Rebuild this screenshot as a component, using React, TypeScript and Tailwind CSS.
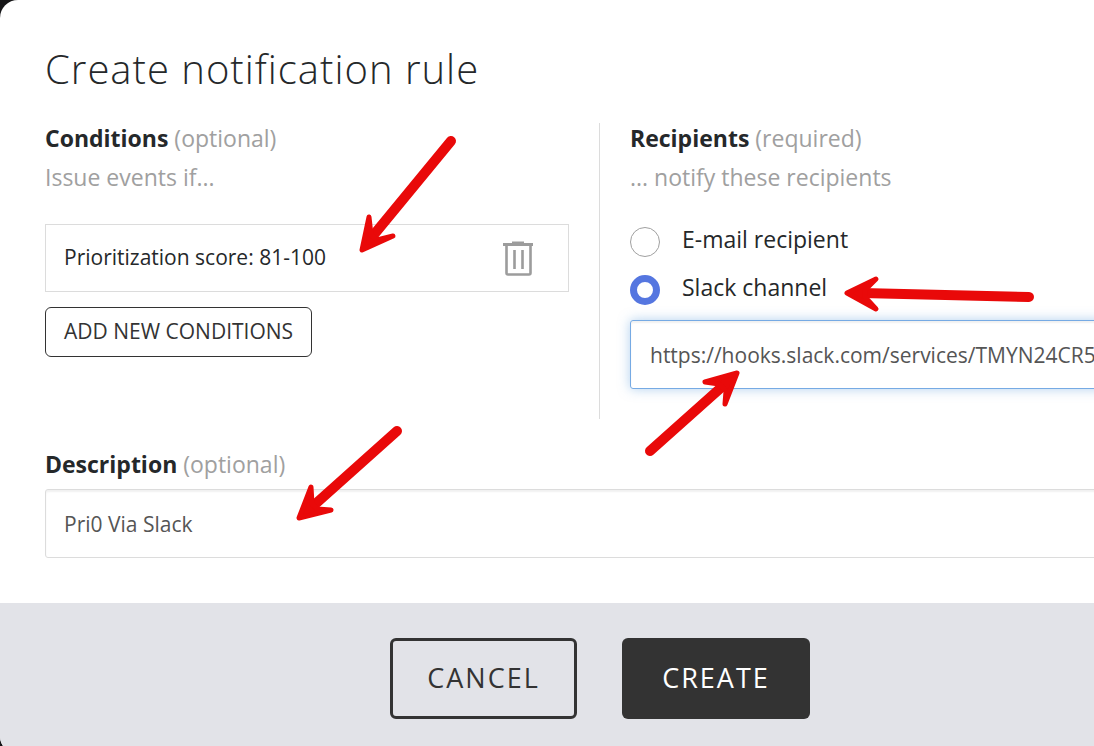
import { useState } from 'react'

const recipientTypes = [
  { id: 'email', label: 'E-mail recipient' },
  { id: 'slack', label: 'Slack channel' },
]

// Callout arrows: a thick shaft plus a swept-back head
const arrows = [
  { id: 'condition', shaft: 'M451 141L372 237', head: 'M362 250L369 217L371 235L377 240L393 236Z' },
  { id: 'channel', shaft: 'M1029 297L862 293', head: 'M847 293L876 279L865 290L865 297L876 309Z' },
  { id: 'webhook', shaft: 'M650 451L724 385', head: 'M737 373L705 382L719 384L726 391L725 404Z' },
  { id: 'description', shaft: 'M397 431L312 507', head: 'M299 518L311 487L312 504L317 509L331 510Z' },
]

function TrashIcon() {
  return (
    <svg width="32" height="36" viewBox="0 0 32 36" fill="none" stroke="#9c9c9c" aria-hidden="true">
      <path d="M1 4.5h30" strokeWidth="3" />
      <path d="M10 2.500h12" strokeWidth="2" />
      <path d="M4.500 5v28a1.500 1.500 0 0 0 1.500 1.500h21a1.500 1.500 0 0 0 1.500-1.500V5" strokeWidth="2.600" />
      <path d="M12.500 10v19M20.500 10v19" strokeWidth="2.600" />
    </svg>
  )
}

export default function App() {
  const [recipient, setRecipient] = useState('slack')
  const [webhook, setWebhook] = useState('https://hooks.slack.com/services/TMYN24CR5')
  const [description, setDescription] = useState('Pri0 Via Slack')

  return (
    <div className="h-screen overflow-hidden bg-[#161618] font-['Open_Sans',sans-serif] text-[#25282a]">
      <div role="dialog" aria-labelledby="rule-title" className="relative w-full min-w-[1200px] overflow-hidden rounded-[18px] bg-white">
        <div className="px-[45px] pt-[42px] pb-[45px]">
          <h1 id="rule-title" className="mb-[27px] text-[40px] leading-[54px] font-light tracking-wide">
            Create notification rule
          </h1>

          <div className="grid grid-cols-2">
            {/* Conditions */}
            <section className="min-h-[296px] border-r border-[#dcdcdc] pr-[30px]">
              <h2 className="text-[23px] leading-[30px] font-bold">
                Conditions <span className="font-normal text-[#a0a0a0]">(optional)</span>
              </h2>
              <p className="mt-[9px] text-[23px] leading-[30px] text-[#a0a0a0]">Issue events if...</p>
              <div className="mt-8 flex h-[68px] items-center justify-between border border-[#dcdcdc] pr-[34px] pl-[18px]">
                <span className="text-[21px]">Prioritization score: 81-100</span>
                <button type="button" aria-label="Remove condition">
                  <TrashIcon />
                </button>
              </div>
              <button
                type="button"
                className="mt-[15px] h-[50px] rounded-md border border-[#333] px-[18px] text-[21px] text-[#333]"
              >
                ADD NEW CONDITIONS
              </button>
            </section>

            {/* Recipients */}
            <section className="pl-[30px]">
              <h2 className="text-[23px] leading-[30px] font-bold">
                Recipients <span className="font-normal text-[#a0a0a0]">(required)</span>
              </h2>
              <p className="mt-[9px] text-[23px] leading-[30px] text-[#a0a0a0]">... notify these recipients</p>
              <div className="mt-8 space-y-[15px]">
                {recipientTypes.map(type => (
                  <label key={type.id} className="flex items-start gap-[22px] text-[23px] leading-[30px]">
                    <input
                      type="radio"
                      name="recipient"
                      value={type.id}
                      checked={recipient === type.id}
                      onChange={() => setRecipient(type.id)}
                      className="mt-[3px] size-[30px] shrink-0 appearance-none rounded-full border border-[#a0a0a0] bg-white checked:border-[7px] checked:border-[#5576e0]"
                    />
                    {type.label}
                  </label>
                ))}
              </div>
              <input
                type="text"
                aria-label="Slack webhook URL"
                value={webhook}
                onChange={e => setWebhook(e.target.value)}
                className="mt-[15px] h-[69px] w-full rounded-[3px] border border-[#76aae4] px-[19px] text-[21px] text-[#555] shadow-[0_0_12px_rgba(102,163,224,0.5),inset_0_2px_2px_rgba(0,0,0,0.06)] outline-none"
              />
            </section>
          </div>

          {/* Description */}
          <label htmlFor="description" className="mt-[30px] block text-[23px] leading-[30px] font-bold">
            Description <span className="font-normal text-[#a0a0a0]">(optional)</span>
          </label>
          <input
            id="description"
            type="text"
            value={description}
            onChange={e => setDescription(e.target.value)}
            className="mt-[10px] block h-[69px] w-full rounded-[3px] border border-[#dcdcdc] px-[18px] text-[21px] text-[#555] shadow-[inset_0_2px_2px_rgba(0,0,0,0.06)] outline-none"
          />
        </div>

        <footer className="flex justify-center gap-[45px] bg-[#e2e3e8] py-[35px]">
          <button type="button" className="h-[81px] w-[187px] rounded-md border-3 border-[#333] text-[27px] tracking-[2px] text-[#333]">
            CANCEL
          </button>
          <button type="button" className="h-[81px] w-[188px] rounded-md bg-[#333] text-[27px] font-medium tracking-[2px] text-white">
            CREATE
          </button>
        </footer>

        <svg
          className="pointer-events-none absolute top-0 left-0"
          width="1100"
          height="560"
          fill="#e90909"
          stroke="#e90909"
          strokeLinecap="round"
          strokeLinejoin="round"
          aria-hidden="true"
        >
          {arrows.map(arrow => (
            <g key={arrow.id}>
              <path d={arrow.shaft} strokeWidth="10" />
              <path d={arrow.head} strokeWidth="5" />
            </g>
          ))}
        </svg>
      </div>
    </div>
  )
}
